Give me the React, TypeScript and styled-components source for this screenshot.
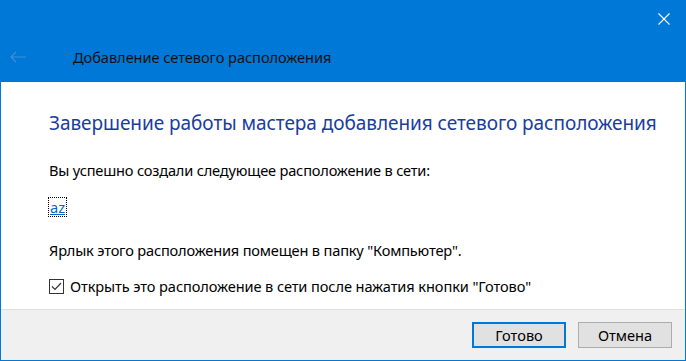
import React from 'react'
import styled, { createGlobalStyle } from 'styled-components'

const Global = createGlobalStyle`
  html, body {
    margin: 0;
    padding: 0;
    background: #ffffff;
  }
  * { box-sizing: border-box; }
`

const Window = styled.div`
  width: 686px;
  height: 361px;
  display: flex;
  flex-direction: column;
  border: 1px solid #0078d7;
  border-top: none;
  font-family: "Noto Sans", "Liberation Sans", sans-serif;
  background: #ffffff;
  overflow: hidden;
`

const Header = styled.div`
  height: 82px;
  margin: 0 -1px;
  background: #0078d7;
  display: flex;
  flex-direction: column;
`

const TopRow = styled.div`
  height: 40px;
  display: flex;
  justify-content: flex-end;
  align-items: flex-start;
  padding: 13px 16px 0 0;
`

const CloseBtn = styled.div`
  width: 12px;
  height: 12px;
  display: flex;
`

const TitleRow = styled.div`
  display: flex;
  align-items: center;
  height: 34px;
  padding-left: 10px;
`

const Back = styled.div`
  width: 17px;
  display: flex;
  margin-right: 46px;
`

const Title = styled.div`
  font-size: 14.6px;
  letter-spacing: -0.05px;
  color: #111111;
`

const Content = styled.div`
  flex: 1;
  padding: 28px 0 0 48px;
  display: flex;
  flex-direction: column;
`

const Heading = styled.div`
  font-size: 19px;
  letter-spacing: -0.05px;
  color: #1a3c9e;
  line-height: 26px;
  margin-bottom: 24px;
`

const Text = styled.div<{ $gap?: number }>`
  font-size: 14.6px;
  letter-spacing: -0.18px;
  color: #000000;
  line-height: 20px;
  margin-bottom: ${p => p.$gap ?? 0}px;
`

const Link = styled.span`
  align-self: flex-start;
  font-size: 14.6px;
  line-height: 18px;
  color: #0066cc;
  text-decoration: underline;
  outline: 1px dotted #000000;
  margin-bottom: 24px;
  padding: 0 1px;
`

const CheckRow = styled.label`
  display: flex;
  align-items: center;
  gap: 6px;
  font-size: 14.6px;
  letter-spacing: -0.1px;
  color: #000000;
`

const Box = styled.span`
  width: 15px;
  height: 15px;
  border: 1px solid #333333;
  display: flex;
  align-items: center;
  justify-content: center;
  background: #ffffff;
`

const Footer = styled.div`
  height: 51px;
  background: #f0f0f0;
  border-top: 1px solid #dfdfdf;
  display: flex;
  justify-content: flex-end;
  align-items: center;
  gap: 12px;
  padding-right: 13px;
`

const Button = styled.button<{ $default?: boolean }>`
  width: 94px;
  height: 26px;
  font-family: "Noto Sans", "Liberation Sans", sans-serif;
  font-size: 14.6px;
  color: #000000;
  background: #e1e1e1;
  border: ${p => (p.$default ? '2px solid #0078d7' : '1px solid #adadad')};
  padding: 0;
`

const App = () => {
  return (
    <>
      <Global />
      <Window>
        <Header>
          <TopRow>
            <CloseBtn>
              <svg width="12" height="12" viewBox="0 0 12 12">
                <path d="M0.5 0.5 L11.5 11.5 M11.5 0.5 L0.5 11.5" stroke="#ffffff" strokeWidth="1.1" />
              </svg>
            </CloseBtn>
          </TopRow>
          <TitleRow>
            <Back>
              <svg width="17" height="12" viewBox="0 0 17 12">
                <path d="M1 6 H16 M6 1 L1 6 L6 11" stroke="#3f8fd6" strokeWidth="1.2" fill="none" />
              </svg>
            </Back>
            <Title>Добавление сетевого расположения</Title>
          </TitleRow>
        </Header>
        <Content>
          <Heading>Завершение работы мастера добавления сетевого расположения</Heading>
          <Text $gap={18}>Вы успешно создали следующее расположение в сети:</Text>
          <Link>az</Link>
          <Text $gap={16}>Ярлык этого расположения помещен в папку "Компьютер".</Text>
          <CheckRow>
            <Box>
              <svg width="11" height="9" viewBox="0 0 11 9">
                <path d="M1 4.5 L4 7.5 L10 1" stroke="#333333" strokeWidth="1.2" fill="none" />
              </svg>
            </Box>
            Открыть это расположение в сети после нажатия кнопки "Готово"
          </CheckRow>
        </Content>
        <Footer>
          <Button $default>Готово</Button>
          <Button>Отмена</Button>
        </Footer>
      </Window>
    </>
  )
}

export default App
